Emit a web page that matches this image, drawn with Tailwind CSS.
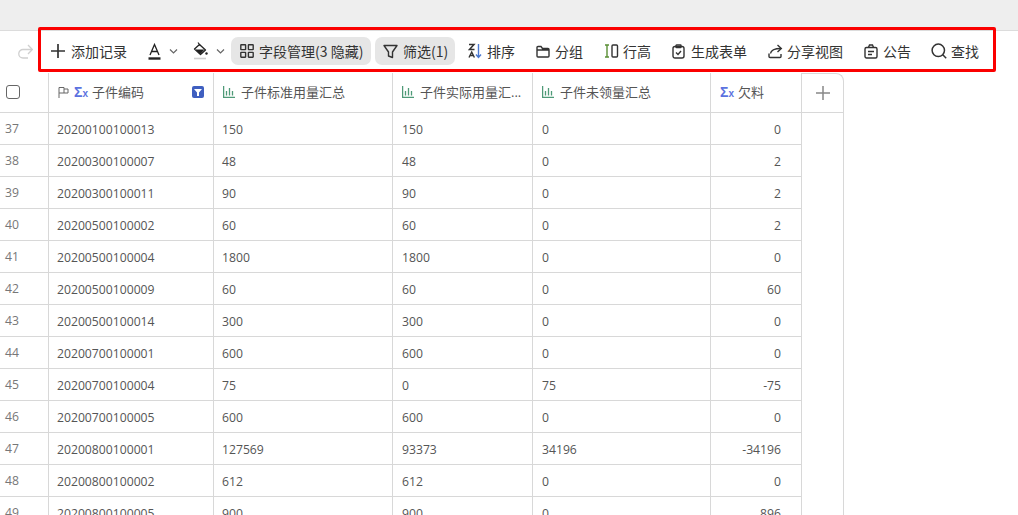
<!DOCTYPE html>
<html lang="zh">
<head>
<meta charset="utf-8">
<script src="https://cdn.jsdelivr.net/npm/@tailwindcss/browser@4"></script>
</head>
<body class="bg-white overflow-hidden font-['Open_Sans','Noto_Sans_CJK_SC',sans-serif]">
<div class="relative w-[1018px] h-[515px] overflow-hidden">
  <div class="h-[31px] bg-[#eeeeee] border-b border-[#dcdcdc]"></div>
  <!-- toolbar -->
  <div class="h-[40px] mb-[2px] flex items-center text-[14px] text-[#333] whitespace-nowrap">
    <svg class="ml-[18px] w-[15px] h-[15px] text-[#d0d0d0]" viewBox="0 0 15 15" fill="none" stroke="currentColor" stroke-width="1.300"><path d="M14 5.500H5a4 4 0 0 0 0 8.500h5"/><path d="M10 1l4.300 4.500L10 10"/></svg>
    <svg class="ml-[18px] w-[14px] h-[14px] text-[#333]" viewBox="0 0 14 14" fill="none" stroke="currentColor" stroke-width="1.700"><path d="M7 0v14M0 7h14"/></svg>
    <span class="ml-[6px] w-[56px]">添加记录</span>
    <svg class="ml-[21px] w-[13px] h-[17px] text-[#222]" viewBox="0 0 13 17" fill="none" stroke="currentColor" stroke-width="1.300"><path d="M2 12L6.500 1.500 11 12M3.500 8.500h6"/><path d="M.5 15.500h12" stroke-width="2.400"/></svg>
    <svg class="ml-[8px] w-[9px] h-[7px] text-[#666]" viewBox="0 0 9 7" fill="none" stroke="currentColor" stroke-width="1.200"><path d="M1 1.500l3.500 3.500L8 1.500"/></svg>
    <svg class="ml-[15px] w-[15px] h-[18px] text-[#222]" viewBox="0 0 15 18" fill="none"><path d="M2.500 7.500h9l-3.500 4-1 .3z" fill="currentColor"/><path d="M1.500 7l5-4.500 6 5.500-5 4.500z" stroke="currentColor" stroke-width="1.300" stroke-linejoin="round"/><path d="M5 .5l2.500 3.500" stroke="currentColor" stroke-width="1.200"/><circle cx="13.500" cy="11.500" r="1.200" fill="currentColor"/><path d="M1 16.500h12" stroke="#cfcfcf" stroke-width="1.600"/></svg>
    <svg class="ml-[8px] w-[9px] h-[7px] text-[#666]" viewBox="0 0 9 7" fill="none" stroke="currentColor" stroke-width="1.200"><path d="M1 1.500l3.500 3.500L8 1.500"/></svg>
    <div class="ml-[6px] h-[28px] w-[140px] rounded-[7px] bg-[#e6e6e6] flex items-center pl-[9px]">
      <svg class="w-[14px] h-[14px] text-[#333]" viewBox="0 0 14 14" fill="none" stroke="currentColor" stroke-width="1.400"><rect x=".8" y=".8" width="4.800" height="4.800" rx=".4"/><rect x="8.400" y=".8" width="4.800" height="4.800" rx=".4"/><rect x=".8" y="8.400" width="4.800" height="4.800" rx=".4"/><rect x="8.400" y="8.400" width="4.800" height="4.800" rx=".4"/></svg>
      <span class="ml-[5px] font-['Noto_Sans_CJK_SC']">字段管理(3 隐藏)</span>
    </div>
    <div class="ml-[4px] h-[28px] w-[80px] rounded-[7px] bg-[#e6e6e6] flex items-center pl-[8px]">
      <svg class="w-[15px] h-[15px] text-[#333]" viewBox="0 0 15 15" fill="none" stroke="currentColor" stroke-width="1.400" stroke-linejoin="round"><path d="M1 1.500h13L9.500 8v5.500L5.500 12V8z"/></svg>
      <span class="ml-[5px] font-['Noto_Sans_CJK_SC']">筛选(1)</span>
    </div>
    <div class="ml-[13px] flex items-center">
      <svg class="w-[14px] h-[16px]" viewBox="0 0 14 16" fill="none"><path d="M1 1.500h5L1.500 6.500h5" stroke="#333" stroke-width="1.500"/><path d="M1 14.500L3.700 9l2.700 5.500M2 12.500h3.400" stroke="#333" stroke-width="1.400"/><path d="M10.500 1v13M8 11.500l2.500 3 2.500-3" stroke="#4a78d0" stroke-width="1.400"/></svg>
      <span class="ml-[5px]">排序</span>
    </div>
    <div class="ml-[21px] flex items-center">
      <svg class="w-[14px] h-[13px] text-[#333]" viewBox="0 0 14 13" fill="none" stroke="currentColor" stroke-width="1.400"><path d="M1 11V2.500A1 1 0 0 1 2 1.500h3l1.500 2H12a1 1 0 0 1 1 1V11a1 1 0 0 1-1 1H2a1 1 0 0 1-1-1zM1 5h12"/></svg>
      <span class="ml-[5px]">分组</span>
    </div>
    <div class="ml-[21px] flex items-center">
      <svg class="w-[15px] h-[14px]" viewBox="0 0 15 14" fill="none"><path d="M1 1h4M1 13h4M3 1v12" stroke="#5a8f35" stroke-width="1.400"/><rect x="8" y="1" width="5.500" height="12" rx="1" stroke="#333" stroke-width="1.400"/></svg>
      <span class="ml-[4px]">行高</span>
    </div>
    <div class="ml-[21px] flex items-center">
      <svg class="w-[13px] h-[15px] text-[#333]" viewBox="0 0 13 15" fill="none" stroke="currentColor" stroke-width="1.400"><rect x="1" y="2.500" width="11" height="11.500" rx="2"/><rect x="4" y="1" width="5" height="2.500" rx=".5"/><path d="M4 8.500l2 2 3-3.500"/></svg>
      <span class="ml-[6px]">生成表单</span>
    </div>
    <div class="ml-[21px] flex items-center">
      <svg class="w-[15px] h-[15px] text-[#333]" viewBox="0 0 15 15" fill="none" stroke="currentColor" stroke-width="1.400"><path d="M1 9.500v3a1 1 0 0 0 1 1h10a1 1 0 0 0 1-1V10"/><path d="M2.500 9.500C3 6 6 4.500 13 4.500"/><path d="M9.500 1l3.800 3.500L9.500 8"/></svg>
      <span class="ml-[4px]">分享视图</span>
    </div>
    <div class="ml-[21px] flex items-center">
      <svg class="w-[14px] h-[15px] text-[#333]" viewBox="0 0 14 15" fill="none" stroke="currentColor" stroke-width="1.400"><rect x="1" y="3.500" width="12" height="10.500" rx="1.500"/><path d="M4.500 3.500L5.500 1h3l1 2.500M4 7.500h6M4 10.500h4"/></svg>
      <span class="ml-[5px]">公告</span>
    </div>
    <div class="ml-[20px] flex items-center">
      <svg class="w-[16px] h-[16px] text-[#333]" viewBox="0 0 16 16" fill="none" stroke="currentColor" stroke-width="1.500"><circle cx="7.300" cy="7.300" r="6.200"/><path d="M11.800 11.800l3.400 3.400"/></svg>
      <span class="ml-[4px]">查找</span>
    </div>
  </div>

  <!-- table -->
  <div class="text-[12.200px] leading-none text-[#555]">
    <!-- header -->
    <div class="grid grid-cols-[49px_165px_179px_140px_178px_91px_42px] w-[844px] h-[40px] border-b border-[#d8d8d8] items-stretch text-[13px] text-[#555] [&>div]:pb-[1px]">
      <div class="border-r border-[#d8d8d8] flex items-center pl-[6px]"><div class="w-[14px] h-[14px] rounded-[3px] border border-[#666]"></div></div>
      <div class="border-r border-[#d8d8d8] flex items-center pl-[9px] pr-[9px]">
        <svg class="w-[11px] h-[12px] text-[#666]" viewBox="0 0 11 12" fill="none" stroke="currentColor" stroke-width="1"><path d="M1 12V1.500h5V7H1M6 3h4v4H6"/></svg>
        <span class="ml-[5px] w-[13px] text-[#5b72e0] text-[14px] font-semibold whitespace-nowrap font-['Liberation_Sans']">Σ<span class="text-[10px]">x</span></span>
        <span class="ml-[5px]">子件编码</span>
        <span class="ml-auto w-[12px] h-[12px] rounded-[2px] bg-[#3f5fc0] flex items-center justify-center"><svg class="w-[8px] h-[7px]" viewBox="0 0 8 7"><path d="M0 0h8L5 3.500V7H3V3.500z" fill="#fff"/></svg></span>
      </div>
      <div class="border-r border-[#d8d8d8] flex items-center pl-[9px]">
        <svg class="w-[12px] h-[12px] text-[#4f9a78]" viewBox="0 0 12 12" fill="none" stroke="currentColor" stroke-width="1.300"><path d="M.600 0v11.400H12M3.500 5v4.500M6.500 2v7.500M9.500 5v4.500"/></svg>
        <span class="ml-[6px]">子件标准用量汇总</span>
      </div>
      <div class="border-r border-[#d8d8d8] flex items-center pl-[9px]">
        <svg class="w-[12px] h-[12px] text-[#4f9a78]" viewBox="0 0 12 12" fill="none" stroke="currentColor" stroke-width="1.300"><path d="M.600 0v11.400H12M3.500 5v4.500M6.500 2v7.500M9.500 5v4.500"/></svg>
        <span class="ml-[6px]">子件实际用量汇...</span>
      </div>
      <div class="border-r border-[#d8d8d8] flex items-center pl-[9px]">
        <svg class="w-[12px] h-[12px] text-[#4f9a78]" viewBox="0 0 12 12" fill="none" stroke="currentColor" stroke-width="1.300"><path d="M.600 0v11.400H12M3.500 5v4.500M6.500 2v7.500M9.500 5v4.500"/></svg>
        <span class="ml-[6px]">子件未领量汇总</span>
      </div>
      <div class="border-r border-[#d8d8d8] flex items-center pl-[9px]">
        <span class="w-[13px] text-[#5b72e0] text-[14px] font-semibold whitespace-nowrap font-['Liberation_Sans']">Σ<span class="text-[10px]">x</span></span>
        <span class="ml-[5px]">欠料</span>
      </div>
      <div class="border-r border-t border-[#d8d8d8] rounded-tr-[8px] flex items-center justify-center">
        <svg class="w-[14px] h-[14px] text-[#888]" viewBox="0 0 14 14" fill="none" stroke="currentColor" stroke-width="1.500"><path d="M7 0v14M0 7h14"/></svg>
      </div>
    </div>
    <!-- rows -->
    <div class="grid grid-cols-[49px_165px_179px_140px_178px_91px_42px] w-[844px] auto-rows-[32px] [&>div]:border-b [&>div]:border-r [&>div]:border-[#d8d8d8] [&>div]:flex [&>div]:items-center [&>div]:pl-[9px] [&>div]:pt-[4px] [&>div:nth-child(7n+2)]:pl-[8px] [&>div:nth-child(7n+3)]:pl-[8px]">
      <div class="!pl-[5px] !pt-[2px] !text-[#777]">37</div><div>20200100100013</div><div>150</div><div>150</div><div>0</div><div class="justify-end pr-[20px]">0</div><div class="!border-b-0"></div>
      <div class="!pl-[5px] !pt-[2px] !text-[#777]">38</div><div>20200300100007</div><div>48</div><div>48</div><div>0</div><div class="justify-end pr-[20px]">2</div><div class="!border-b-0"></div>
      <div class="!pl-[5px] !pt-[2px] !text-[#777]">39</div><div>20200300100011</div><div>90</div><div>90</div><div>0</div><div class="justify-end pr-[20px]">2</div><div class="!border-b-0"></div>
      <div class="!pl-[5px] !pt-[2px] !text-[#777]">40</div><div>20200500100002</div><div>60</div><div>60</div><div>0</div><div class="justify-end pr-[20px]">2</div><div class="!border-b-0"></div>
      <div class="!pl-[5px] !pt-[2px] !text-[#777]">41</div><div>20200500100004</div><div>1800</div><div>1800</div><div>0</div><div class="justify-end pr-[20px]">0</div><div class="!border-b-0"></div>
      <div class="!pl-[5px] !pt-[2px] !text-[#777]">42</div><div>20200500100009</div><div>60</div><div>60</div><div>0</div><div class="justify-end pr-[20px]">60</div><div class="!border-b-0"></div>
      <div class="!pl-[5px] !pt-[2px] !text-[#777]">43</div><div>20200500100014</div><div>300</div><div>300</div><div>0</div><div class="justify-end pr-[20px]">0</div><div class="!border-b-0"></div>
      <div class="!pl-[5px] !pt-[2px] !text-[#777]">44</div><div>20200700100001</div><div>600</div><div>600</div><div>0</div><div class="justify-end pr-[20px]">0</div><div class="!border-b-0"></div>
      <div class="!pl-[5px] !pt-[2px] !text-[#777]">45</div><div>20200700100004</div><div>75</div><div>0</div><div>75</div><div class="justify-end pr-[20px]">-75</div><div class="!border-b-0"></div>
      <div class="!pl-[5px] !pt-[2px] !text-[#777]">46</div><div>20200700100005</div><div>600</div><div>600</div><div>0</div><div class="justify-end pr-[20px]">0</div><div class="!border-b-0"></div>
      <div class="!pl-[5px] !pt-[2px] !text-[#777]">47</div><div>20200800100001</div><div>127569</div><div>93373</div><div>34196</div><div class="justify-end pr-[20px]">-34196</div><div class="!border-b-0"></div>
      <div class="!pl-[5px] !pt-[2px] !text-[#777]">48</div><div>20200800100002</div><div>612</div><div>612</div><div>0</div><div class="justify-end pr-[20px]">0</div><div class="!border-b-0"></div>
      <div class="!pl-[5px] !pt-[2px] !text-[#777]">49</div><div>20200800100005</div><div>900</div><div>900</div><div>0</div><div class="justify-end pr-[20px]">896</div><div class="!border-b-0"></div>
    </div>
  </div>
  <!-- red annotation rectangle -->
  <div class="absolute left-[38px] top-[27px] w-[958px] h-[45px] border-[3px] border-[#fb0000] rounded-[2px] pointer-events-none"></div>
</div>
</body>
</html>
